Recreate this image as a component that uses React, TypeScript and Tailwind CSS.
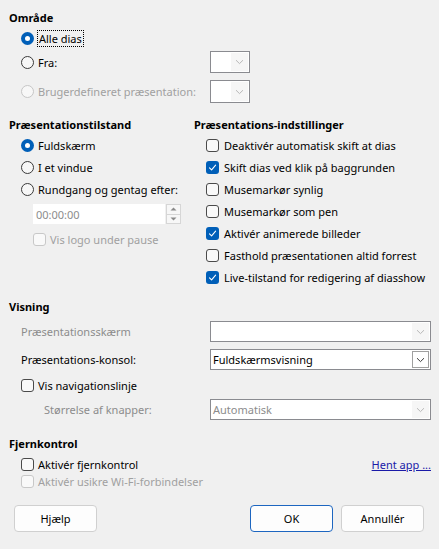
import React from "react";

const font = { fontFamily: '"Noto Sans", "Open Sans", sans-serif' };

function Heading({ children }: { children: React.ReactNode }) {
  return <div className="h-[16px] flex items-center font-bold text-black whitespace-nowrap">{children}</div>;
}

function Radio({ checked, disabled }: { checked?: boolean; disabled?: boolean }) {
  if (checked) {
    return (
      <span className="w-[13px] h-[13px] rounded-full bg-[#005fb8] flex items-center justify-center shrink-0">
        <span className="w-[5px] h-[5px] rounded-full bg-white" />
      </span>
    );
  }
  return (
    <span
      className={
        "w-[13px] h-[13px] rounded-full border shrink-0 bg-[#f7f7f7] " +
        (disabled ? "border-[#c6c6c6]" : "border-[#3a3a3a]")
      }
    />
  );
}

function Check({ checked, disabled }: { checked?: boolean; disabled?: boolean }) {
  if (checked) {
    return (
      <span className="w-[13px] h-[13px] rounded-[3px] bg-[#005fb8] flex items-center justify-center shrink-0">
        <svg width="9" height="9" viewBox="0 0 9 9" fill="none">
          <path d="M1.5 4.8 L3.6 6.8 L7.6 2.2" stroke="white" strokeWidth="1.1" strokeLinecap="round" strokeLinejoin="round" />
        </svg>
      </span>
    );
  }
  return (
    <span
      className={
        "w-[13px] h-[13px] rounded-[3px] border shrink-0 bg-[#f9f9f9] " +
        (disabled ? "border-[#c8c8c8]" : "border-[#4a4a4a]")
      }
    />
  );
}

function Chevron({ dark }: { dark?: boolean }) {
  return (
    <svg width="9" height="6" viewBox="0 0 9 6" fill="none">
      <path d="M1 1.2 L4.5 4.6 L8 1.2" stroke={dark ? "#3a3a3a" : "#b8b8b8"} strokeWidth="1" />
    </svg>
  );
}

function Combo({
  width,
  height,
  text,
  active,
  muted,
}: {
  width: string;
  height: string;
  text?: string;
  active?: boolean;
  muted?: boolean;
}) {
  return (
    <div className={"flex shrink-0 border border-[#8a8b90] bg-white " + width + " " + height}>
      <div className={"flex-1 flex items-center pl-[2px] whitespace-nowrap " + (muted ? "text-[#8c8c8c]" : "text-black")}>
        {text}
      </div>
      <div
        className={
          "w-[17px] flex items-center justify-center my-[1px] mr-[1px] " +
          (active ? "border border-[#a0a0a0] bg-white" : "bg-[#f6f6f6]")
        }
      >
        <Chevron dark={active} />
      </div>
    </div>
  );
}

function Button({ children, primary, className }: { children: React.ReactNode; primary?: boolean; className?: string }) {
  return (
    <div
      className={
        "w-[83px] h-[27px] rounded-[4px] border bg-[#fdfdfd] flex items-center justify-center text-black " +
        (primary ? "border-[#1d66c0]" : "border-[#d0d0d0]") +
        " " +
        (className ?? "")
      }
    >
      {children}
    </div>
  );
}

export default function App() {
  const rightOptions: [string, boolean][] = [
    ["Deaktivér automatisk skift at dias", false],
    ["Skift dias ved klik på baggrunden", true],
    ["Musemarkør synlig", false],
    ["Musemarkør som pen", false],
    ["Aktivér animerede billeder", true],
    ["Fasthold præsentationen altid forrest", false],
    ["Live-tilstand for redigering af diasshow", true],
  ];

  return (
    <div
      className="w-[439px] h-[549px] bg-[#f0f0f0] pt-[9px] text-[11px] leading-[15px] text-black overflow-hidden whitespace-nowrap"
      style={font}
    >
      {/* Område */}
      <div className="pl-[9px]">
        <Heading>Område</Heading>
      </div>
      <div className="pl-[21px]">
        <div className="mt-[2px] h-[22px] flex items-center gap-[3px]">
          <Radio checked />
          <span className="border border-dotted border-black px-[1px] leading-[15px]">Alle dias</span>
        </div>
        <div className="mt-[2px] h-[22px] flex items-center">
          <div className="w-[189px] shrink-0 flex items-center gap-[4px]">
            <Radio />
            <span>Fra:</span>
          </div>
          <Combo width="w-[40px]" height="h-[22px]" />
        </div>
        <div className="mt-[7px] h-[23px] flex items-center">
          <div className="w-[189px] shrink-0 flex items-center gap-[4px] text-[#a0a0a0]">
            <Radio disabled />
            <span>Brugerdefineret præsentation:</span>
          </div>
          <Combo width="w-[40px]" height="h-[23px]" />
        </div>
      </div>

      {/* Præsentationstilstand / -indstillinger */}
      <div className="mt-[13px] flex items-start">
        <div className="w-[194px] shrink-0 pl-[9px]">
          <Heading>Præsentationstilstand</Heading>
          <div className="pl-[12px] mt-[2px]">
            <div className="h-[22px] flex items-center gap-[4px]">
              <Radio checked />
              <span>Fuldskærm</span>
            </div>
            <div className="h-[22px] flex items-center gap-[4px]">
              <Radio />
              <span>I et vindue</span>
            </div>
            <div className="h-[22px] flex items-center gap-[4px]">
              <Radio />
              <span>Rundgang og gentag efter:</span>
            </div>
            <div className="mt-[4px] ml-[12px] h-[20px] flex">
              <div className="w-[132px] bg-white flex items-center pl-[3px] text-[#8c8c8c]">00:00:00</div>
              <div className="w-[15px] ml-[1px] flex flex-col">
                <div className="flex-1 border border-[#d6d6d6] bg-[#f7f7f7] flex items-center justify-center">
                  <svg width="7" height="4" viewBox="0 0 7 4">
                    <path d="M0.5 3.5 L3.5 0.5 L6.5 3.5 Z" fill="#8a8a8a" />
                  </svg>
                </div>
                <div className="flex-1 border border-t-0 border-[#d6d6d6] bg-[#f7f7f7] flex items-center justify-center">
                  <svg width="7" height="4" viewBox="0 0 7 4">
                    <path d="M0.5 0.5 L3.5 3.5 L6.5 0.5 Z" fill="#8a8a8a" />
                  </svg>
                </div>
              </div>
            </div>
            <div className="mt-[4px] ml-[12px] h-[22px] flex items-center gap-[4px] text-[#a0a0a0]">
              <Check disabled />
              <span>Vis logo under pause</span>
            </div>
          </div>
        </div>
        <div className="flex-1">
          <Heading>Præsentations-indstillinger</Heading>
          <div className="pl-[12px] mt-[2px]">
            {rightOptions.map(([label, on]) => (
              <div key={label} className="h-[22px] flex items-center gap-[5px]">
                <Check checked={on} />
                <span>{label}</span>
              </div>
            ))}
          </div>
        </div>
      </div>

      {/* Visning */}
      <div className="mt-[10px] pl-[9px]">
        <Heading>Visning</Heading>
      </div>
      <div className="pl-[21px]">
        <div className="mt-[7px] h-[21px] flex items-center">
          <div className="w-[189px] shrink-0 text-[#8c8c8c]">Præsentationsskærm</div>
          <Combo width="w-[221px]" height="h-[21px]" />
        </div>
        <div className="mt-[7px] h-[21px] flex items-center">
          <div className="w-[189px] shrink-0">Præsentations-konsol:</div>
          <Combo width="w-[221px]" height="h-[21px]" text="Fuldskærmsvisning" active />
        </div>
        <div className="mt-[4px] h-[22px] flex items-center gap-[4px]">
          <Check />
          <span>Vis navigationslinje</span>
        </div>
        <div className="mt-[3px] h-[21px] flex items-center">
          <div className="w-[189px] shrink-0 pl-[23px] text-[#8c8c8c]">Størrelse af knapper:</div>
          <Combo width="w-[221px]" height="h-[21px]" text="Automatisk" muted />
        </div>
      </div>

      {/* Fjernkontrol */}
      <div className="mt-[15px] pl-[9px]">
        <Heading>Fjernkontrol</Heading>
      </div>
      <div className="pl-[21px] pr-[8px]">
        <div className="mt-[4px] h-[18px] flex items-center">
          <div className="flex-1 flex items-center gap-[4px]">
            <Check />
            <span>Aktivér fjernkontrol</span>
          </div>
          <span className="text-[#1a1aa8] underline">Hent app ...</span>
        </div>
        <div className="h-[17px] flex items-center gap-[4px] text-[#a0a0a0]">
          <Check disabled />
          <span>Aktivér usikre Wi-Fi-forbindelser</span>
        </div>
      </div>

      {/* Buttons */}
      <div className="mt-[15px] flex items-center pl-[14px] pr-[15px]">
        <Button>Hjælp</Button>
        <div className="flex-1" />
        <Button primary>OK</Button>
        <Button className="ml-[8px]">Annullér</Button>
      </div>
    </div>
  );
}
